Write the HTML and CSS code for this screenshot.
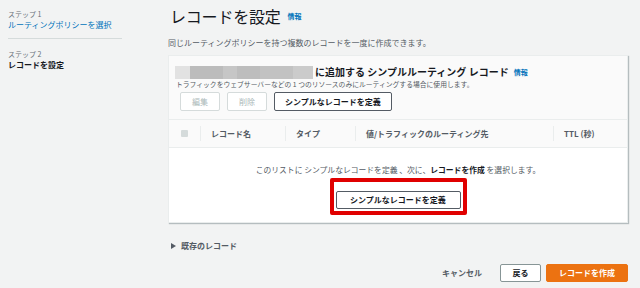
FILE: index.html
```html
<!DOCTYPE html>
<html lang="ja">
<head>
  <meta charset="UTF-8">
  <meta name="viewport" content="width=device-width, initial-scale=1.0">
  <link rel="stylesheet" href="styles.css">
  <title>レコードを設定</title>
</head>
<body>
  <div class="sidebar">
    <div class="step-label">ステップ 1</div>
    <div class="step-link">ルーティングポリシーを選択</div>
    <div class="step-divider"></div>
    <div class="step-label step-label-2">ステップ 2</div>
    <div class="step-current">レコードを設定</div>
  </div>

  <div class="main">
    <div class="page-title">
      <h1>レコードを設定</h1>
      <span class="info">情報</span>
    </div>
    <p class="page-desc">同じルーティングポリシーを持つ複数のレコードを一度に作成できます。</p>

    <div class="card">
      <div class="card-header">
        <div class="card-title">
          <span class="blur">
            <span class="b1"></span><span class="b2"></span><span class="b3"></span><span class="b4"></span><span class="b5"></span><span class="b6"></span>
          </span>
          <span>に追加する シンプルルーティング レコード</span>
          <span class="info info-card">情報</span>
        </div>
        <div class="card-desc">トラフィックをウェブサーバーなどの 1 つのリソースのみにルーティングする場合に使用します。</div>
        <div class="card-actions">
          <button class="btn btn-disabled btn-small">編集</button>
          <button class="btn btn-disabled btn-small">削除</button>
          <button class="btn">シンプルなレコードを定義</button>
        </div>
      </div>

      <div class="table-head">
        <div class="th th-check"><span class="checkbox"></span></div>
        <div class="th"><span class="th-text">レコード名</span></div>
        <div class="th"><span class="th-text">タイプ</span></div>
        <div class="th"><span class="th-text">値/トラフィックのルーティング先</span></div>
        <div class="th"><span class="th-text">TTL (秒)</span></div>
      </div>

      <div class="table-empty">
        <p class="empty-msg">このリストに シンプルなレコードを定義 、次に、<b>レコードを作成</b> を選択します。</p>
        <div class="highlight">
          <button class="btn btn-wide">シンプルなレコードを定義</button>
        </div>
      </div>
    </div>

    <div class="existing">
      <span class="caret"></span>
      <span>既存のレコード</span>
    </div>

    <div class="footer">
      <span class="link-btn">キャンセル</span>
      <button class="btn btn-back">戻る</button>
      <button class="btn btn-primary">レコードを作成</button>
    </div>
  </div>
</body>
</html>
```

FILE: styles.css
```css
body {
    margin: 0;
    height: 288px;
    overflow: hidden;
    display: flex;
    background-color: #f2f3f3;
    font-family: "Noto Sans CJK JP", "Noto Sans", sans-serif;
    color: #16191f;
}

/* サイドバー */
.sidebar {
    width: 114px;
    padding: 8px 8px 0 8px;
    flex-shrink: 0;
}

.step-label {
    font-size: 7px;
    line-height: 12px;
    color: #687078;
}

.step-label-2 {
    margin-top: 9px;
}

.step-link {
    font-size: 8px;
    line-height: 10px;
    color: #0073bb;
}

.step-divider {
    margin-top: 8px;
    border-top: 1px solid #d5dbdb;
}

.step-current {
    font-size: 8px;
    line-height: 10px;
    font-weight: bold;
}

/* メイン */
.main {
    flex: 1;
    padding: 5px 12px 0 38px;
}

.page-title {
    display: flex;
    align-items: center;
    gap: 7px;
    padding-left: 2px;
}

.page-title h1 {
    margin: 0;
    font-size: 16px;
    line-height: 22px;
    font-weight: 400;
    letter-spacing: -0.2px;
}

.info {
    font-size: 7px;
    font-weight: bold;
    color: #0073bb;
}

.page-desc {
    margin: 10px 0 0 0;
    font-size: 8px;
    line-height: 12px;
    color: #545b64;
}

.card {
    margin-top: 6px;
    background-color: #ffffff;
    border: 1px solid #eaeded;
    box-shadow: 1px 1px 1px rgba(0, 28, 36, 0.25);
}

.card-header {
    background-color: #fafafa;
    padding: 9px 12px 8px 6px;
}

.card-title {
    display: flex;
    align-items: center;
    font-size: 10px;
    line-height: 14px;
    font-weight: bold;
}

.blur {
    display: flex;
    height: 13px;
    margin-right: 2px;
}

.blur span {
    height: 100%;
}

.b1 { width: 15px; background: #e2e2e2; }
.b2 { width: 33px; background: #bcbcbc; }
.b3 { width: 14px; background: #c6c6c6; }
.b4 { width: 23px; background: #bdbdbd; }
.b5 { width: 33px; background: #c2c2c2; }
.b6 { width: 20px; background: #cbcbcb; }

.info-card {
    margin-left: 5px;
}

.card-desc {
    font-size: 6.8px;
    line-height: 10px;
    color: #545b64;
    padding-left: 1px;
}

.card-actions {
    display: flex;
    gap: 7px;
    margin-top: 3px;
    padding-left: 5px;
}

.btn {
    height: 19px;
    padding: 0 10px;
    background-color: #ffffff;
    border: 1px solid #545b64;
    border-radius: 2px;
    font-family: inherit;
    font-size: 8px;
    font-weight: bold;
    color: #16191f;
}

.btn-small {
    width: 40px;
    padding: 0;
}

.btn-disabled {
    border-color: #d5dbdb;
    color: #aab7b8;
    font-weight: normal;
}

/* テーブル */
.table-head {
    display: grid;
    grid-template-columns: 31px 85px 70px 198px 1fr;
    height: 27px;
    background-color: #fafafa;
    border-top: 1px solid #eaeded;
    border-bottom: 1px solid #eaeded;
}

.th {
    display: flex;
    align-items: center;
}

.th-check {
    justify-content: center;
}

.checkbox {
    width: 7px;
    height: 7px;
    background-color: #d5dbdb;
    border-radius: 1px;
}

.th-text {
    display: block;
    width: 100%;
    border-left: 1px solid #eaeded;
    padding-left: 10px;
    font-size: 8px;
    line-height: 15px;
    font-weight: bold;
    color: #545b64;
}

.table-empty {
    padding: 16px 0 7px 0;
    display: flex;
    flex-direction: column;
    align-items: center;
}

.empty-msg {
    margin: 0;
    font-size: 7.8px;
    line-height: 12px;
    color: #545b64;
}

.empty-msg b {
    color: #16191f;
}

.highlight {
    margin-top: 2px;
    padding: 2px;
    border: 4px solid #e00000;
    border-radius: 2px;
}

.btn-wide {
    height: 18px;
    width: 125px;
    padding: 0;
}

/* 既存のレコード */
.existing {
    margin-top: 18px;
    display: flex;
    align-items: center;
    gap: 5px;
    padding-left: 3px;
    font-size: 8px;
    line-height: 10px;
    font-weight: bold;
    color: #545b64;
}

.caret {
    width: 0;
    height: 0;
    border-top: 3px solid transparent;
    border-bottom: 3px solid transparent;
    border-left: 5px solid #545b64;
}

.footer {
    margin-top: 13px;
    display: flex;
    justify-content: flex-end;
    align-items: center;
}

.link-btn {
    font-size: 8px;
    font-weight: bold;
    color: #545b64;
    margin-right: 18px;
}

.btn-back {
    width: 41px;
    height: 18px;
    padding: 0;
    border-color: #879596;
    margin-right: 5px;
}

.btn-primary {
    width: 82px;
    height: 18px;
    padding: 0;
    background-color: #ec7211;
    border-color: #ec7211;
    color: #ffffff;
}
```
